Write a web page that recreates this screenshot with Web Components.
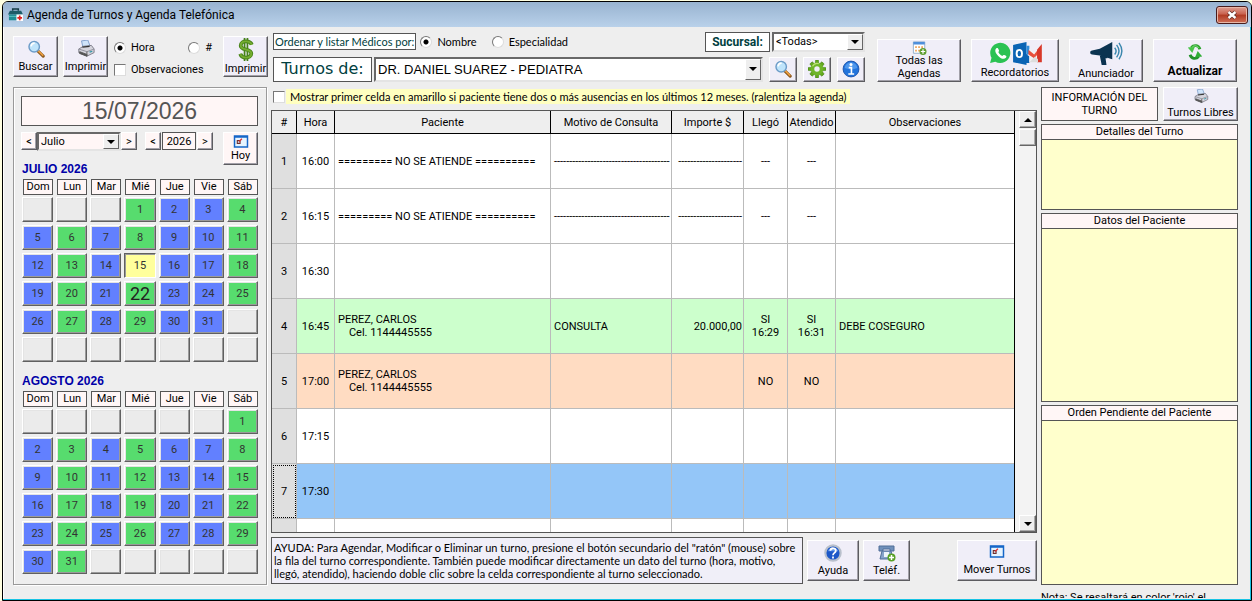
<!DOCTYPE html>
<html lang="es">
<head>
<meta charset="utf-8">
<title>Agenda de Turnos y Agenda Telefónica</title>
<style>
  html, body { height: 100%; margin: 0; }
  body {
    background: #ffffe1;
    color: #000;
    font: 11px/13px Roboto, "Liberation Sans", Arial, sans-serif;
    overflow: hidden;
  }
</style>
</head>
<body>
<agenda-window>
  <span slot="title">Agenda de Turnos y Agenda Telefónica</span>
  <agenda-toolbar></agenda-toolbar>
  <agenda-main></agenda-main>
</agenda-window>

<script>
function makeTemplate(html) {
  const template = document.createElement('template');
  template.innerHTML = html;
  return template;
}

function attach(host, template) {
  host.attachShadow({mode: 'open'});
  host.shadowRoot.appendChild(template.content.cloneNode(true));
}

// radios and tick boxes look the same in every element that has them
const checkStyles = `
  label { display: flex; align-items: center; gap: 5px; white-space: nowrap; }
  input[type=radio], input[type=checkbox] {
    appearance: none;
    box-sizing: border-box;
    flex: none;
    width: 12px;
    height: 12px;
    margin: 0;
    background: #fff;
    border: 1px solid;
    border-color: #777 #ddd #ddd #777;
  }
  input[type=radio] { border-radius: 50%; }
  input[type=radio]:checked { background: radial-gradient(circle, #000 2px, #fff 3px); }
  input[type=checkbox]:checked { background: #555; }
`;

const icons = {
  agenda: ['0 0 16 16', `
    <path d="M5 4V2h6v2" fill="none" stroke="#123a44" stroke-width="1.6"/>
    <path d="M2 4h12l2 4H0z" fill="#1d5c68"/><path d="M1 8h14v6H1z" fill="#1f8c94"/>
    <path d="M1 10h14" stroke="#62c4c4"/><path d="M9 8h7v7H9z" fill="#fff"/>
    <path d="M12.5 9v5M10 11.5h5" stroke="#d22" stroke-width="1.8"/>`],
  search: ['0 0 20 20', `
    <path d="M12 12l6 6" stroke="#8c5a20" stroke-width="3.4" stroke-linecap="round"/>
    <path d="M12.5 12l5 5" stroke="#f0a040" stroke-width="1.8" stroke-linecap="round"/>
    <circle cx="8" cy="7.500" r="5.800" fill="#bfe4fb" stroke="#6d9cc8" stroke-width="1.6"/>
    <path d="M4.500 7a4 4 0 0 1 4-3.500" fill="none" stroke="#fff" stroke-width="1.8"/>`],
  printer: ['0 0 20 20', `
    <path d="M5 1l7-1 3 8-8 2z" fill="#cfe4fa" stroke="#7c9cc8"/>
    <path d="M2 10l5-3 9-1 3 4v4l-8 4-9-4z" fill="#d4d4dc" stroke="#777783"/>
    <path d="M2 10l9 3 8-3" fill="none" stroke="#8d8d98"/>
    <path d="M3 13l8 3v2l-8-3zM11 13v5" fill="#555" stroke="#555"/>
    <path d="M6 8l8-1" stroke="#333" stroke-width="1.4"/><path d="M14 13.500l3-1" stroke="#39a" stroke-width="1.4"/>`],
  dollar: ['0 0 16 24', `
    <path d="M14 7C13 4 11 3.500 8 3.500S2.500 5 2.500 8c0 5 11 3 11 8 0 3-2.500 4.500-5.500 4.500S3 19.500 2 16.500" fill="none" stroke="#47821a" stroke-width="4"/>
    <path d="M6.500 0v24M9.500 0v24" stroke="#47821a" stroke-width="1.8"/>
    <path d="M14 7C13 4 11 3.500 8 3.500S2.500 5 2.500 8c0 5 11 3 11 8 0 3-2.500 4.500-5.500 4.500S3 19.500 2 16.500" fill="none" stroke="#75ad30" stroke-width="2"/>`],
  gear: ['0 0 20 20', `
    <g fill="#63a81e" stroke="#3d7a10" stroke-width=".6">
      <path d="M8.500 0h3l.5 4h-4zM8.500 20h3l.5-4h-4zM0 8.500v3l4 .5V8zM20 8.500v3l-4 .5V8z"/>
      <path d="M2 4.500l2.500-2.500 3 2.400-3 3zM18 4.500l-2.500-2.500-3 2.400 3 3zM2 15.500l2.500 2.500 3-2.400-3-3zM18 15.500l-2.500 2.500-3-2.400 3-3z"/>
    </g>
    <circle cx="10" cy="10" r="5" fill="none" stroke="#6fb52a" stroke-width="4"/>
    <path d="M5 7a6 6 0 0 1 7-3" fill="none" stroke="#b8e070" stroke-width="1.4"/>`],
  info: ['0 0 20 20', `
    <circle cx="10" cy="10" r="8.800" fill="#2273dc" stroke="#174fa8"/>
    <path d="M3 9a7 6.500 0 0 1 14 0c-4 2-9 2-14 0z" fill="#4f97ec"/>
    <circle cx="10" cy="5" r="1.700" fill="#fff"/><path d="M7.500 8.500H10.500V15M7 15.500h6.500" stroke="#fff" stroke-width="1.800" fill="none"/>`],
  help: ['0 0 20 20', `
    <circle cx="10" cy="10" r="8.500" fill="#1c57c8" stroke="#b9c0cc" stroke-width="2.4"/>
    <path d="M4 8a6.500 6 0 0 1 12 0" fill="#5c93ea"/>
    <path d="M7 7.500c.5-4 7-3.500 6 .5-.5 2-3 2-3 4.500" fill="none" stroke="#fff" stroke-width="2"/><path d="M9 14h2v2H9z" fill="#fff"/>`],
  sheet: ['0 0 16 16', `
    <path d="M1 1h13v13H1z" fill="#fff" stroke="#88a8c8"/><path d="M1 1h13v3H1z" fill="#4f8edb"/>
    <path d="M3 6h2v2H3zM6.500 6h2v2h-2zM10 6h2v2h-2zM3 10h2v2H3zM6.500 10h2v2h-2z" fill="#f0a45c"/>
    <circle cx="12" cy="12" r="4" fill="#5f9f30"/><path d="M12 9.500v5M9.500 12h5" stroke="#fff" stroke-width="1.4"/>`],
  mail: ['0 0 56 24', `
    <path d="M2 22l1.500-5.500a10.500 10.500 0 1 1 4 4z" fill="#2bc253"/>
    <path d="M8.500 6.500c-2 2-1 5 2 8s6 4 8 2c1-1.200.6-1.800-1-2.600-1.500-.8-1.800-.4-2.700.6-2-.8-3.500-2.300-4.200-4 .8-.9 1-1.300.4-2.500-.7-1.800-1.300-2.200-2.500-1.500z" fill="#fff"/>
    <path d="M26 3l14-3v24l-14-3z" fill="#0a63b4"/><path d="M40 4h3v8l-3 2z" fill="#2f8ddb"/><path d="M39 12l4 3v7h-4z" fill="#0a63b4"/>
    <ellipse cx="32.500" cy="12" rx="2.800" ry="3.800" fill="none" stroke="#fff" stroke-width="2"/>
    <path d="M43 7l5 4 8-7v17H43z" fill="#f2f2f2"/>
    <path d="M42 8l6 5 7-9v5l-7 8-6-4z" fill="#e8503c"/>
    <path d="M51 8l5-6v19h-5z" fill="#d8382a"/><path d="M43 21l6-6 3 3v3z" fill="#ddd"/>`],
  megaphone: ['0 0 34 26', `
    <path d="M2 10l8-2L23 1v18l-13-4-8-1a2 2 0 0 1 0-4z" fill="#0b3350"/>
    <path d="M10 15h7l1 3h-2l1 7h-5z" fill="#0b3350"/>
    <path d="M25.500 7q3 3.500 0 7M27.500 4q5 6.500 0 13M30 2q6 8.500 0 17" fill="none" stroke="#3b87ae" stroke-width="1.500"/>`],
  refresh: ['0 0 20 20', `
    <path d="M15.500 7C14 2.500 9 1.500 6 5" fill="none" stroke="#2fa42f" stroke-width="3.200"/><path d="M2 5l8-1-3 7z" fill="#49c549"/>
    <path d="M4.500 13c1.500 4.500 6.500 5.500 9.500 2" fill="none" stroke="#22922a" stroke-width="3.200"/><path d="M18 15l-8 1 3-7z" fill="#2fae35"/>
    <path d="M14 5.500c-2-3-5-3-7-1" fill="none" stroke="#92e592"/>`],
  phone: ['0 0 18 18', `
    <path d="M1 2h15v5h-4V5H5v2H1z" fill="#7090bb" stroke="#506e98"/>
    <path d="M4 7h9l2 8H2z" fill="#86a3ca" stroke="#506e98"/><path d="M6 8h5v5H6z" fill="#eef4fb"/>
    <circle cx="13.500" cy="13.500" r="4" fill="#58a027"/><path d="M13.500 11v5M11 13.500h5" stroke="#fff" stroke-width="1.500"/>`],
  form: ['0 0 16 14', `
    <path d="M1 1h14v12H1z" fill="#e6f4ff" stroke="#1566c8" stroke-width="1.600"/><path d="M1 1h14v2H1z" fill="#1566c8"/>
    <path d="M4 6h3v3H4z" fill="none" stroke="#703030" stroke-width="1.200"/><path d="M6 7l3-3" stroke="#d33" stroke-width="1.400"/>`],
  close: ['0 0 12 10', `
    <path d="M2.500 2l7 6M9.500 2l-7 6" stroke="#5d2c26" stroke-width="4"/>
    <path d="M2.500 2l7 6M9.500 2l-7 6" stroke="#fff" stroke-width="2.400"/>`],
  up: ['0 0 8 4', '<path d="M0 4l4-4 4 4z" fill="#000"/>'],
  down: ['0 0 8 4', '<path d="M0 0l4 4 4-4z" fill="#000"/>']
};

class AgendaIcon extends HTMLElement {
  constructor() {
    super();
    this.attachShadow({mode: 'open'});
  }

  connectedCallback() {
    const [box, shapes] = icons[this.getAttribute('name')];
    this.shadowRoot.innerHTML = `
      <style>
        :host { display: block; flex: none; width: 18px; height: 18px; }
        svg { display: block; width: 100%; height: 100%; }
      </style>
      <svg viewBox="${box}" aria-hidden="true">${shapes}</svg>
    `;
  }
}

const buttonTemplate = makeTemplate(`
  <style>
    :host { display: block; }
    button {
      display: flex;
      flex-direction: column;
      align-items: center;
      justify-content: space-evenly;
      box-sizing: border-box;
      width: 100%;
      height: 100%;
      padding: 0;
      overflow: hidden;
      color: inherit;
      font: inherit;
      white-space: nowrap;
      background: var(--face, #f0eef8);
      border: 1px solid;
      border-color: #fff #5c5c60 #5c5c60 #fff;
      box-shadow: inset -1px -1px #a2a0a8;
    }
  </style>
  <button type="button"><slot name="icon"></slot><slot></slot></button>
`);

class ToolButton extends HTMLElement {
  constructor() {
    super();
    attach(this, buttonTemplate);
    if (this.hasAttribute('label')) {
      this.shadowRoot.querySelector('button').setAttribute('aria-label', this.getAttribute('label'));
    }
  }
}

const pickTemplate = makeTemplate(`
  <style>
    :host { display: flex; gap: 2px; min-width: 0; }
    label {
      display: flex;
      align-items: center;
      justify-content: center;
      box-sizing: border-box;
      flex: none;
      width: var(--label-width, 65px);
      color: #004040;
      background: #fff;
      border: 1px solid #555;
      font: var(--label-font, bold 12px/16px Roboto, "Liberation Sans", Arial, sans-serif);
    }
    .box {
      display: grid;
      flex: 1;
      min-width: 0;
      box-sizing: border-box;
      background: var(--field, #fff);
      border: 2px solid;
      border-color: #686868 #e4e4e4 #e4e4e4 #686868;
    }
    select, .arrow { grid-area: 1 / 1; }
    select {
      appearance: none;
      min-width: 0;
      width: 100%;
      margin: 0;
      padding: 0 18px 0 2px;
      color: inherit;
      font: inherit;
      background: none;
      border: 0;
      border-radius: 0;
    }
    .arrow {
      display: grid;
      place-items: center;
      justify-self: end;
      width: 14px;
      background: #eee;
      border: 1px solid;
      border-color: #fff #666 #666 #fff;
      pointer-events: none;
    }
    agenda-icon { width: 8px; height: 4px; }
  </style>
  <label for="pick"></label>
  <div class="box">
    <select id="pick"></select>
    <span class="arrow"><agenda-icon name="down"></agenda-icon></span>
  </div>
`);

class PickList extends HTMLElement {
  constructor() {
    super();
    attach(this, pickTemplate);
    const label = this.shadowRoot.querySelector('label');
    const select = this.shadowRoot.querySelector('select');
    if (this.hasAttribute('quiet')) {
      label.remove();
      select.setAttribute('aria-label', this.getAttribute('label'));
    } else {
      label.textContent = this.getAttribute('label');
    }
    for (const text of this.getAttribute('options').split('|')) {
      select.add(new Option(text));
    }
    select.value = this.getAttribute('value') || select.options[0].value;
  }
}

const windowTemplate = makeTemplate(`
  <style>
    :host {
      display: flex;
      flex-direction: column;
      box-sizing: border-box;
      height: calc(100vh - 1px);
      margin: 1px 0 0 2px;
      overflow: hidden;
      background: #eee;
      border: 1px solid #000;
      border-radius: 6px 6px 0 0;
      box-shadow: inset -1px -1px #18c4e4, inset 1px 0 #fff;
    }
    header {
      display: flex;
      align-items: center;
      gap: 4px;
      flex: none;
      height: 25px;
      padding: 0 3px 0 5px;
      background: linear-gradient(#98b3d0, #b9d1ea);
      font-size: 12px;
      line-height: 16px;
    }
    agenda-icon { width: 15px; height: 15px; }
    h1 { flex: 1; margin: 0; font: inherit; }
    button {
      display: grid;
      place-items: center;
      width: 32px;
      height: 18px;
      padding: 0;
      background: linear-gradient(#dfa093, #c9614d 45%, #b03a22 50%, #cf7058);
      border: 1px solid #4a1c1c;
      border-radius: 3px;
      box-shadow: inset 0 0 0 1px #e8b8a8;
    }
    button agenda-icon { width: 12px; height: 10px; }
  </style>
  <header>
    <agenda-icon name="agenda"></agenda-icon>
    <h1><slot name="title"></slot></h1>
    <button type="button" aria-label="Cerrar"><agenda-icon name="close"></agenda-icon></button>
  </header>
  <slot></slot>
`);

class AgendaWindow extends HTMLElement {
  constructor() {
    super();
    attach(this, windowTemplate);
  }
}

const toolbarTemplate = makeTemplate(`
  <style>
    ${checkStyles}
    :host { display: flex; align-items: center; flex: none; padding: 4px 14px 0 10px; min-height: 51px; }
    .print { display: flex; gap: 5px; width: 255px; height: 41px; }
    .print tool-button { width: 45px; }
    .print form { display: grid; grid-template-columns: 1fr auto; flex: 1; margin: 0 6px 0 1px; align-content: space-between; padding: 5px 0 1px; }
    .print .wide { grid-column: 1 / 3; }
    .dollar { width: 18px; height: 23px; }
    .doctor { display: flex; flex-direction: column; gap: 5px; flex: 1; min-width: 0; margin: 0 12px 0 5px; }
    .row { display: flex; align-items: stretch; }
    .order { display: flex; align-items: center; gap: 15px; flex: 1; font-family: Lato, Roboto, sans-serif; }
    .order b {
      box-sizing: border-box;
      padding: 1px;
      margin-right: -11px;
      color: #004040;
      font-weight: normal;
      background: #fff;
      border: 1px solid #555;
      white-space: nowrap;
    }
    .branch { height: 20px; width: 160px; }
    .name { flex: 1; height: 25px; font-family: "Liberation Sans", Arial, sans-serif; font-size: 13px; --label-width: 99px; --label-font: 16px/20px "DejaVu Sans", Verdana, sans-serif; }
    .small { display: flex; gap: 6px; margin-left: 6px; }
    .small tool-button { width: 28px; height: 25px; }
    .actions { display: flex; gap: 10px; align-self: flex-end; }
    .actions tool-button { height: 43px; width: 84px; }
    .mail { width: 54px; height: 23px; }
    .horn { width: 33px; height: 25px; }
    .actions .bold { font-size: 12px; font-weight: bold; }
    .two { text-align: center; }
    .sheet { width: 15px; height: 14px; margin-bottom: -3px; }
  </style>
  <div class="print">
    <tool-button><agenda-icon slot="icon" name="search"></agenda-icon>Buscar</tool-button>
    <tool-button><agenda-icon slot="icon" name="printer"></agenda-icon>Imprimir</tool-button>
    <form>
      <label><input type="radio" name="print-by" checked> Hora</label>
      <label><input type="radio" name="print-by"> #</label>
      <label class="wide"><input type="checkbox"> Observaciones</label>
    </form>
    <tool-button><agenda-icon slot="icon" name="dollar" class="dollar"></agenda-icon>Imprimir</tool-button>
  </div>
  <div class="doctor">
    <div class="row">
      <div class="order">
        <b>Ordenar y listar Médicos por:</b>
        <label><input type="radio" name="order" checked> Nombre</label>
        <label><input type="radio" name="order"> Especialidad</label>
      </div>
      <pick-list class="branch" label="Sucursal:" options="&lt;Todas&gt;"></pick-list>
    </div>
    <div class="row">
      <pick-list class="name" label="Turnos de:" options="DR. DANIEL SUAREZ - PEDIATRA"></pick-list>
      <div class="small">
        <tool-button label="Buscar médico"><agenda-icon slot="icon" name="search"></agenda-icon></tool-button>
        <tool-button label="Configurar"><agenda-icon slot="icon" name="gear"></agenda-icon></tool-button>
        <tool-button label="Información"><agenda-icon slot="icon" name="info"></agenda-icon></tool-button>
      </div>
    </div>
  </div>
  <div class="actions">
    <tool-button><agenda-icon slot="icon" name="sheet" class="sheet"></agenda-icon><span class="two">Todas las<br>Agendas</span></tool-button>
    <tool-button style="width: 88px"><agenda-icon slot="icon" name="mail" class="mail"></agenda-icon>Recordatorios</tool-button>
    <tool-button style="width: 74px"><agenda-icon slot="icon" name="megaphone" class="horn"></agenda-icon>Anunciador</tool-button>
    <tool-button class="bold"><agenda-icon slot="icon" name="refresh"></agenda-icon>Actualizar</tool-button>
  </div>
`);

class AgendaToolbar extends HTMLElement {
  constructor() {
    super();
    attach(this, toolbarTemplate);
  }
}

const monthTemplate = makeTemplate(`
  <style>
    :host { display: block; }
    h2 { margin: 0 0 2px; color: #0000a8; font: bold 12px/16px "Liberation Sans", Arial, sans-serif; }
    .names, .days { display: grid; grid-template-columns: repeat(7, 1fr); gap: 3px; }
    .names { margin-bottom: 2px; text-align: center; }
    .names span {
      box-sizing: border-box;
      height: 16px;
      margin-left: 1px;
      line-height: 14px;
      background: #fff6f6;
      border: 1px solid #555;
    }
    button {
      height: 25px;
      padding: 0;
      color: #333;
      font: inherit;
      background: #ebebeb;
      border: 1px solid;
      border-color: #fff #606060 #606060 #fff;
      box-shadow: inset -1px -1px #9a9a9a, inset 1px 1px #e4e4e4;
    }
    .off { background: #6280ff; }
    .on { background: #57dc6e; }
    .today { background: #ffff9c; border-color: #606060 #fff #fff #606060; box-shadow: inset 1px 1px #9a9a9a; }
    .big { font-size: 18px; line-height: 20px; color: #222; }
  </style>
  <h2></h2>
  <div class="names"></div>
  <div class="days"></div>
`);

class MonthGrid extends HTMLElement {
  constructor() {
    super();
    attach(this, monthTemplate);
    const root = this.shadowRoot;
    const first = Number(this.getAttribute('first'));
    const today = Number(this.getAttribute('today'));
    const big = Number(this.getAttribute('big'));

    root.querySelector('h2').textContent = this.getAttribute('heading');
    for (const name of ['Dom', 'Lun', 'Mar', 'Mié', 'Jue', 'Vie', 'Sáb']) {
      const span = document.createElement('span');
      span.textContent = name;
      root.querySelector('.names').appendChild(span);
    }

    // six full weeks, the office is open on Monday, Wednesday and Saturday
    for (let i = 0; i < 42; i++) {
      const button = document.createElement('button');
      const day = i - first + 1;
      button.type = 'button';
      if (day > 0 && day <= 31) {
        button.textContent = day;
        button.className = [1, 3, 6].includes(i % 7) ? 'on' : 'off';
        if (day === today) button.className = 'today';
        if (day === big) button.classList.add('big');
      } else {
        button.disabled = true;
      }
      root.querySelector('.days').appendChild(button);
    }
  }
}

const sideTemplate = makeTemplate(`
  <style>
    :host {
      display: block;
      box-sizing: border-box;
      padding: 8px 8px 0 7px;
      border: 1px solid #999;
      box-shadow: 1px 1px #fff, inset 1px 1px #fff;
    }
    .date {
      height: 28px;
      color: #555;
      font: 23px/28px "Liberation Sans", Arial, sans-serif;
      text-align: center;
      background: #fff6f6;
      border: 1px solid #555;
    }
    .nav { display: flex; align-items: flex-start; height: 29px; margin-top: 6px; --face: #fff6f6; --field: #fff6f6; }
    .nav tool-button { width: 16px; height: 18px; }
    .nav pick-list { width: 84px; height: 19px; }
    .nav .prev { margin-left: 8px; }
    .nav input {
      box-sizing: border-box;
      width: 34px;
      height: 18px;
      margin: 0 1px;
      padding: 0;
      color: inherit;
      font: inherit;
      text-align: center;
      background: #fff6f6;
      border: 1px solid #555;
    }
    .nav .today { width: 35px; height: 33px; margin-left: auto; }
    .nav agenda-icon { width: 16px; height: 13px; }
    month-grid { margin-left: 1px; }
    month-grid + month-grid { margin-top: 11px; }
  </style>
  <div class="date">15/07/2026</div>
  <div class="nav">
    <tool-button label="Mes anterior">&lt;</tool-button>
    <pick-list quiet label="Mes" value="Julio" options="Enero|Febrero|Marzo|Abril|Mayo|Junio|Julio|Agosto|Septiembre|Octubre|Noviembre|Diciembre"></pick-list>
    <tool-button label="Mes siguiente">&gt;</tool-button>
    <tool-button class="prev" label="Año anterior">&lt;</tool-button>
    <input type="text" value="2026" aria-label="Año">
    <tool-button label="Año siguiente">&gt;</tool-button>
    <tool-button class="today"><agenda-icon slot="icon" name="form"></agenda-icon>Hoy</tool-button>
  </div>
  <month-grid heading="JULIO 2026" first="3" today="15" big="22"></month-grid>
  <month-grid heading="AGOSTO 2026" first="6"></month-grid>
`);

class DateSide extends HTMLElement {
  constructor() {
    super();
    attach(this, sideTemplate);
  }
}

const closed = ['========= NO SE ATIENDE ==========', '-'.repeat(38), '-'.repeat(21), '---', '---', ''];
const free = ['', '', '', '', '', ''];
const rows = [
  {time: '16:00', cells: closed},
  {time: '16:15', cells: closed},
  {time: '16:30', cells: free},
  {time: '16:45', cells: ['PEREZ, CARLOS\n    Cel. 1144445555', 'CONSULTA', '20.000,00', 'SI\n16:29', 'SI\n16:31', 'DEBE COSEGURO'], kind: 'done'},
  {time: '17:00', cells: ['PEREZ, CARLOS\n    Cel. 1144445555', '', '', 'NO', 'NO', ''], kind: 'waiting'},
  {time: '17:15', cells: free},
  {time: '17:30', cells: free, kind: 'selected'},
  {time: '', cells: free}
];

const tableTemplate = makeTemplate(`
  <style>
    :host { display: flex; min-height: 0; overflow: hidden; background: #fff; border: 1px solid #555; }
    .view { flex: 1; min-width: 0; overflow: hidden; border-right: 1px solid #000; }
    table { width: 100%; table-layout: fixed; border-collapse: separate; border-spacing: 0; }
    th, td { box-sizing: border-box; padding: 0 3px; overflow: hidden; font-weight: normal; }
    thead th { height: 23px; padding: 0; background: #eee; border-right: 1px solid #000; border-bottom: 1px solid #000; white-space: nowrap; }
    tbody th, td { height: 55px; border-right: 1px solid #bbb; border-bottom: 1px solid #bbb; white-space: pre; }
    thead th:last-child, td:last-child { border-right: 0; }
    tbody th { padding: 0; background: #dfdfdf; }
    .mid { text-align: center; padding: 0; }
    .end { text-align: right; padding-right: 1px; }
    .done td { background: #ccffcc; }
    .waiting td { background: #ffdcc2; }
    .selected td { background: #94c6f8; }
    .selected th { outline: 1px dotted #000; outline-offset: -2px; }
    .bar {
      display: flex;
      flex-direction: column;
      gap: 1px;
      width: 17px;
      padding-left: 4px;
      background: #f3f3f3;
    }
    .bar button, .thumb {
      display: grid;
      place-items: center;
      box-sizing: border-box;
      height: 17px;
      padding: 0;
      background: #eee;
      border: 1px solid;
      border-color: #fff #666 #666 #fff;
      box-shadow: inset -1px -1px #aaa;
    }
    .bar button:last-child { margin-top: auto; }
    agenda-icon { width: 8px; height: 4px; }
  </style>
  <div class="view">
    <table>
      <colgroup>
        <col style="width: 25px"><col style="width: 38px"><col style="width: 216px"><col style="width: 121px">
        <col style="width: 72px"><col style="width: 44px"><col style="width: 48px"><col>
      </colgroup>
      <thead>
        <tr><th>#</th><th>Hora</th><th>Paciente</th><th>Motivo de Consulta</th><th>Importe $</th><th>Llegó</th><th>Atendido</th><th>Observaciones</th></tr>
      </thead>
      <tbody></tbody>
    </table>
  </div>
  <div class="bar">
    <button type="button" aria-label="Subir"><agenda-icon name="up"></agenda-icon></button>
    <div class="thumb"></div>
    <button type="button" aria-label="Bajar"><agenda-icon name="down"></agenda-icon></button>
  </div>
`);

class TurnTable extends HTMLElement {
  constructor() {
    super();
    attach(this, tableTemplate);
    const classes = ['', '', 'end', 'mid', 'mid', ''];
    const body = this.shadowRoot.querySelector('tbody');

    rows.forEach((row, i) => {
      const tr = body.insertRow();
      if (row.kind) tr.className = row.kind;
      const th = document.createElement('th');
      th.scope = 'row';
      th.textContent = row.time ? i + 1 : '';
      tr.appendChild(th);
      const time = tr.insertCell();
      time.className = 'mid';
      time.textContent = row.time;
      row.cells.forEach((text, n) => {
        const td = tr.insertCell();
        td.className = classes[n];
        td.textContent = text;
      });
    });
  }
}

const panelTemplate = makeTemplate(`
  <style>
    :host { display: flex; flex-direction: column; box-sizing: border-box; min-height: 0; background: #ffffcc; border: 1px solid #555; }
    h3 { flex: none; margin: 0; height: 14px; font: inherit; text-align: center; background: #fff6f6; border-bottom: 1px solid #555; }
  </style>
  <h3><slot></slot></h3>
`);

class InfoPanel extends HTMLElement {
  constructor() {
    super();
    attach(this, panelTemplate);
  }
}

const mainTemplate = makeTemplate(`
  <style>
    ${checkStyles}
    :host {
      display: grid;
      grid-template-columns: 254px 1fr 197px;
      grid-template-rows: minmax(0, 1fr);
      gap: 4px;
      flex: 1;
      min-height: 0;
      padding: 5px 13px 2px 10px;
    }
    date-side { margin-bottom: 13px; }
    .middle { display: flex; flex-direction: column; min-width: 0; margin-bottom: 14px; }
    .absent, .foot p { font-family: Lato, Roboto, sans-serif; }
    .absent { align-self: flex-start; gap: 1px; margin: 2px 0 6px 2px; }
    .absent span { padding: 1px 4px; background: #ffffc0; }
    turn-table { flex: 1; }
    .foot { display: flex; align-items: center; gap: 4px; margin-top: 4px; }
    .foot p {
      box-sizing: border-box;
      width: 532px;
      height: 47px;
      margin: 0;
      padding: 3px 0 3px 2px;
      background: #f0eff8;
      border: 1px solid #555;
    }
    .foot tool-button { width: 52px; height: 41px; }
    .foot .move { width: 80px; margin-left: auto; }
    .form { width: 16px; height: 13px; }
    .info { display: flex; flex-direction: column; gap: 3px; min-height: 0; overflow: hidden; }
    .top { display: flex; gap: 5px; height: 34px; }
    .top h2 {
      display: grid;
      place-items: center;
      box-sizing: border-box;
      flex: 1;
      margin: 0;
      font: inherit;
      text-align: center;
      background: #fff6f6;
      border: 1px solid #555;
    }
    .top tool-button { width: 75px; }
    .top agenda-icon { width: 16px; height: 15px; }
    .note { flex: none; height: 7px; margin: 3px 0 0; overflow: hidden; white-space: nowrap; }
  </style>
  <date-side></date-side>
  <section class="middle">
    <label class="absent"><input type="checkbox"><span>Mostrar primer celda en amarillo si paciente tiene dos o más ausencias en los últimos 12 meses. (ralentiza la agenda)</span></label>
    <turn-table></turn-table>
    <div class="foot">
      <p>AYUDA: Para Agendar, Modificar o Eliminar un turno, presione el botón secundario del "ratón" (mouse) sobre la fila del turno correspondiente. También puede modificar directamente un dato del turno (hora, motivo, llegó, atendido), haciendo doble clic sobre la celda correspondiente al turno seleccionado.</p>
      <tool-button><agenda-icon slot="icon" name="help"></agenda-icon>Ayuda</tool-button>
      <tool-button style="width: 47px"><agenda-icon slot="icon" name="phone"></agenda-icon>Teléf.</tool-button>
      <tool-button class="move"><agenda-icon slot="icon" name="form" class="form"></agenda-icon>Mover Turnos</tool-button>
    </div>
  </section>
  <section class="info">
    <div class="top">
      <h2>INFORMACIÓN DEL<br>TURNO</h2>
      <tool-button><agenda-icon slot="icon" name="printer"></agenda-icon>Turnos Libres</tool-button>
    </div>
    <info-panel style="flex: 86">Detalles del Turno</info-panel>
    <info-panel style="flex: 190">Datos del Paciente</info-panel>
    <info-panel style="flex: 182">Orden Pendiente del Paciente</info-panel>
    <p class="note">Nota: Se resaltará en color 'rojo' el</p>
  </section>
`);

class AgendaMain extends HTMLElement {
  constructor() {
    super();
    attach(this, mainTemplate);
  }
}

customElements.define('agenda-icon', AgendaIcon);
customElements.define('tool-button', ToolButton);
customElements.define('pick-list', PickList);
customElements.define('month-grid', MonthGrid);
customElements.define('date-side', DateSide);
customElements.define('turn-table', TurnTable);
customElements.define('info-panel', InfoPanel);
customElements.define('agenda-window', AgendaWindow);
customElements.define('agenda-toolbar', AgendaToolbar);
customElements.define('agenda-main', AgendaMain);
</script>
</body>
</html>
